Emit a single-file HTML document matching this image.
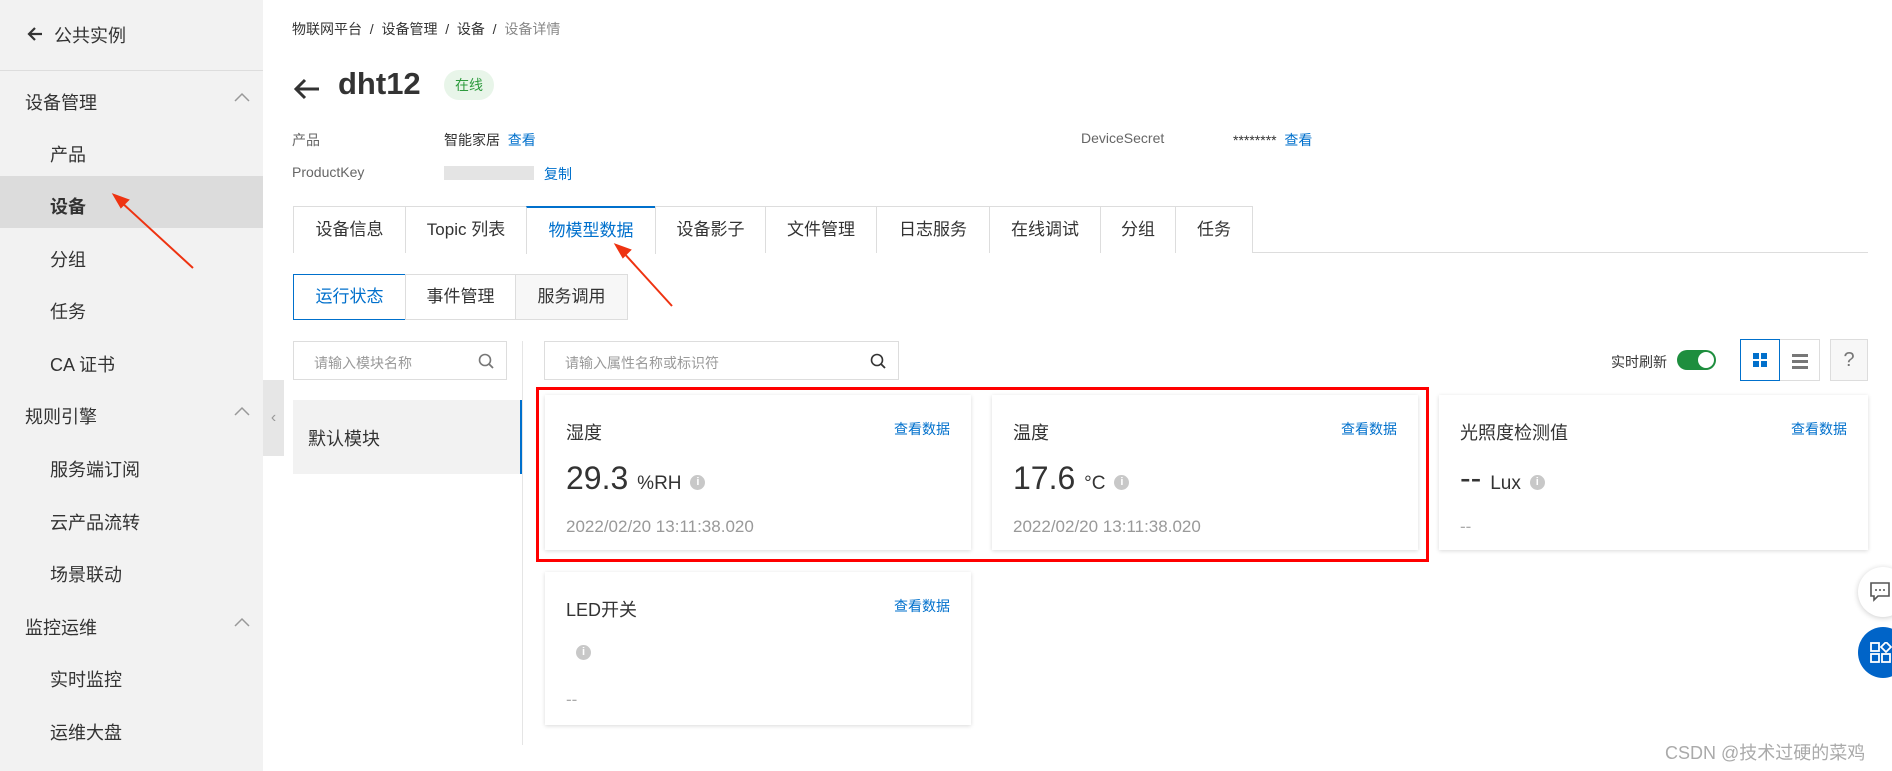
<!DOCTYPE html>
<html><head><meta charset="utf-8"><style>
*{box-sizing:border-box;margin:0;padding:0}
body{width:1892px;height:771px;overflow:hidden;background:#fff;font-family:"Liberation Sans","Noto Sans CJK SC",sans-serif;color:#333;position:relative}
.a{position:absolute;white-space:nowrap}
.side{position:absolute;left:0;top:0;width:263px;height:771px;background:#f2f2f2}
.si{position:absolute;font-size:18px;color:#333}
.chev{position:absolute;left:234px}
.blue{color:#0070cc}
.tab{position:absolute;top:206px;height:47px;border:1px solid #ddd;border-bottom:none;background:#fff;font-size:17px;text-align:center;line-height:46px;color:#333}
.st{position:absolute;top:274px;height:46px;border:1px solid #ddd;font-size:17px;text-align:center;line-height:44px;background:#fff}
.card{position:absolute;background:#fff;box-shadow:0 1px 4px rgba(0,0,0,.15)}
.ct{position:absolute;left:21px;top:24px;font-size:18px}
.cl{position:absolute;right:21px;top:24px;font-size:14px;color:#0070cc}
.cv{position:absolute;left:21px;top:65px;font-size:32px;color:#333}
.cv small{font-size:19px}
.info{display:inline-block;width:15px;height:15px;border-radius:50%;background:#c8c8c8;color:#fff;font-size:11px;text-align:center;line-height:15px;vertical-align:4px;font-weight:bold}
.cd{position:absolute;left:21px;top:122px;font-size:17px;color:#999}
</style></head><body>
<div class="side">
<svg class="a" style="left:26px;top:26px" width="18" height="16" viewBox="0 0 18 16"><path d="M16 8H3M9 2L3 8l6 6" stroke="#333" stroke-width="2.2" fill="none"/></svg>
<div class="si" style="left:54px;top:22px">公共实例</div>
<div style="position:absolute;left:0;top:70px;width:263px;height:1px;background:#ddd"></div>
<div class="si" style="left:25px;top:89px">设备管理</div>
<svg class="chev" style="top:92px" width="16" height="10"><path d="M1 9l7-7 7 7" stroke="#999" stroke-width="1.5" fill="none"/></svg>
<div class="si" style="left:50px;top:141px">产品</div>
<div style="position:absolute;left:0;top:176px;width:263px;height:52px;background:#dcdcdc"></div>
<div class="si" style="left:50px;top:193px;font-weight:bold">设备</div>
<div class="si" style="left:50px;top:246px">分组</div>
<div class="si" style="left:50px;top:298px">任务</div>
<div class="si" style="left:50px;top:351px">CA 证书</div>
<div class="si" style="left:25px;top:403px">规则引擎</div>
<svg class="chev" style="top:406px" width="16" height="10"><path d="M1 9l7-7 7 7" stroke="#999" stroke-width="1.5" fill="none"/></svg>
<div class="si" style="left:50px;top:456px">服务端订阅</div>
<div class="si" style="left:50px;top:509px">云产品流转</div>
<div class="si" style="left:50px;top:561px">场景联动</div>
<div class="si" style="left:25px;top:614px">监控运维</div>
<svg class="chev" style="top:617px" width="16" height="10"><path d="M1 9l7-7 7 7" stroke="#999" stroke-width="1.5" fill="none"/></svg>
<div class="si" style="left:50px;top:666px">实时监控</div>
<div class="si" style="left:50px;top:719px">运维大盘</div>
</div>
<div style="position:absolute;left:263px;top:380px;width:21px;height:76px;background:#e6e6e6;color:#999;font-size:16px;text-align:center;line-height:76px">‹</div>
<div class="a" style="left:292px;top:19px;font-size:14px;color:#333">物联网平台 &nbsp;/&nbsp; 设备管理 &nbsp;/&nbsp; 设备 &nbsp;/&nbsp; <span style="color:#888">设备详情</span></div>
<svg class="a" style="left:293px;top:78px" width="28" height="22" viewBox="0 0 28 22"><path d="M26 11H4M12 2L3 11l9 9" stroke="#333" stroke-width="3" fill="none"/></svg>
<div class="a" style="left:338px;top:66px;font-size:31px;font-weight:bold;color:#333">dht12</div>
<div class="a" style="left:444px;top:70px;width:50px;height:30px;border-radius:15px;background:#e8f5e9;color:#2e9b3e;font-size:14px;text-align:center;line-height:30px">在线</div>
<div class="a" style="left:292px;top:130px;font-size:14px;color:#666">产品</div>
<div class="a" style="left:444px;top:130px;font-size:14px">智能家居 <span class="blue">&nbsp;查看</span></div>
<div class="a" style="left:292px;top:164px;font-size:14px;color:#666">ProductKey</div>
<div class="a" style="left:444px;top:166px;width:90px;height:14px;background:#e4e4e4"></div>
<div class="a blue" style="left:544px;top:164px;font-size:14px">复制</div>
<div class="a" style="left:1081px;top:130px;font-size:14px;color:#666">DeviceSecret</div>
<div class="a" style="left:1233px;top:130px;font-size:14px">******** <span class="blue">&nbsp;查看</span></div>
<div style="position:absolute;left:293px;top:252px;width:1575px;height:1px;background:#ddd"></div>
<div class="tab" style="left:293px;width:113px">设备信息</div>
<div class="tab" style="left:405px;width:122px">Topic 列表</div>
<div class="tab" style="left:526px;width:130px;color:#0070cc;border-top:2px solid #0070cc;height:48px">物模型数据</div>
<div class="tab" style="left:655px;width:111px">设备影子</div>
<div class="tab" style="left:765px;width:112px">文件管理</div>
<div class="tab" style="left:876px;width:114px">日志服务</div>
<div class="tab" style="left:989px;width:112px">在线调试</div>
<div class="tab" style="left:1100px;width:76px">分组</div>
<div class="tab" style="left:1175px;width:78px">任务</div>
<div class="st" style="left:293px;width:113px;border-color:#0070cc;color:#0070cc">运行状态</div>
<div class="st" style="left:405px;width:111px">事件管理</div>
<div class="st" style="left:515px;width:113px;background:#f7f7f7">服务调用</div>
<div class="a" style="left:293px;top:341px;width:214px;height:39px;border:1px solid #ddd;font-size:14px;color:#999;padding:11px 20px">请输入模块名称<svg style="position:absolute;right:12px;top:11px" width="16" height="16"><circle cx="7" cy="7" r="5.5" stroke="#777" stroke-width="1.6" fill="none"/><path d="M11 11l4 4" stroke="#777" stroke-width="1.8"/></svg></div>
<div style="position:absolute;left:522px;top:341px;width:1px;height:404px;background:#e5e5e5"></div>
<div class="a" style="left:293px;top:400px;width:229px;height:74px;background:#f2f2f2;border-right:2px solid #0070cc;font-size:18px;padding:25px 15px">默认模块</div>
<div class="a" style="left:544px;top:341px;width:355px;height:39px;border:1px solid #ddd;font-size:14px;color:#999;padding:11px 20px">请输入属性名称或标识符<svg style="position:absolute;right:12px;top:11px" width="16" height="16"><circle cx="7" cy="7" r="5.5" stroke="#333" stroke-width="1.6" fill="none"/><path d="M11 11l4 4" stroke="#333" stroke-width="1.8"/></svg></div>
<div class="a" style="left:1611px;top:352px;font-size:14px">实时刷新</div>
<div class="a" style="left:1677px;top:350px;width:39px;height:20px;border-radius:10px;background:#1e8e3e"><div style="position:absolute;right:2px;top:2px;width:16px;height:16px;border-radius:50%;background:#fff"></div></div>
<div class="a" style="left:1740px;top:339px;width:40px;height:42px;border:1px solid #0070cc;background:#fff"><div style="position:absolute;left:12px;top:13px;width:6px;height:6px;background:#0070cc;box-shadow:8px 0 #0070cc,0 8px #0070cc,8px 8px #0070cc"></div></div>
<div class="a" style="left:1780px;top:339px;width:40px;height:42px;border:1px solid #ddd;border-left:none;background:#fff"><div style="position:absolute;left:12px;top:14px;width:16px;height:3px;background:#777;box-shadow:0 6px #777,0 12px #777"></div></div>
<div class="a" style="left:1830px;top:339px;width:38px;height:42px;border:1px solid #ddd;background:#f7f7f7;text-align:center;line-height:40px;font-size:20px;color:#777">?</div>
<div class="card" style="left:545px;top:395px;width:426px;height:155px"><div class="ct">湿度</div><div class="cl">查看数据</div><div class="cv">29.3 <small>%RH</small> <span class="info">i</span></div><div class="cd">2022/02/20 13:11:38.020</div></div>
<div class="card" style="left:992px;top:395px;width:426px;height:155px"><div class="ct">温度</div><div class="cl">查看数据</div><div class="cv">17.6 <small>°C</small> <span class="info">i</span></div><div class="cd">2022/02/20 13:11:38.020</div></div>
<div class="card" style="left:1439px;top:395px;width:429px;height:155px"><div class="ct">光照度检测值</div><div class="cl">查看数据</div><div class="cv">-- <small>Lux</small> <span class="info">i</span></div><div class="cd" style="color:#aaa">--</div></div>
<div class="card" style="left:545px;top:572px;width:426px;height:153px"><div class="ct">LED开关</div><div class="cl">查看数据</div><div style="position:absolute;left:31px;top:73px"><span class="info">i</span></div><div class="cd" style="top:118px;color:#aaa">--</div></div>
<div style="position:absolute;left:536px;top:387px;width:893px;height:175px;border:3px solid #f00"></div>
<div class="a" style="left:1858px;top:567px;width:50px;height:50px;border-radius:50%;background:#fff;box-shadow:0 1px 6px rgba(0,0,0,.2)"><svg style="position:absolute;left:12px;top:15px" width="20" height="20"><path d="M1 1h18v13H8l-4 4v-4H1z" stroke="#555" stroke-width="1.6" fill="none"/><circle cx="6" cy="8" r="1" fill="#555"/><circle cx="10" cy="8" r="1" fill="#555"/><circle cx="14" cy="8" r="1" fill="#555"/></svg></div>
<div class="a" style="left:1858px;top:627px;width:50px;height:51px;border-radius:50%;background:#0064c8"><svg style="position:absolute;left:12px;top:15px" width="22" height="22"><g stroke="#fff" stroke-width="1.8" fill="none"><rect x="1" y="1" width="8" height="8"/><rect x="1" y="12" width="8" height="8"/><rect x="12" y="12" width="8" height="8"/><path d="M16 0l5 5-5 5-5-5z"/></g></svg></div>
<svg class="a" style="left:0;top:0" width="1892" height="771"><g stroke="#e31" stroke-width="2" fill="#e31"><line x1="193" y1="268" x2="120" y2="201"/><polygon points="114,195 128,200 121,207"/><line x1="672" y1="306" x2="622" y2="251"/><polygon points="616,245 630,250 623,257"/></g></svg>
<div class="a" style="left:1665px;top:739px;font-size:18px;color:#aaa">CSDN @技术过硬的菜鸡</div>
</body></html>
